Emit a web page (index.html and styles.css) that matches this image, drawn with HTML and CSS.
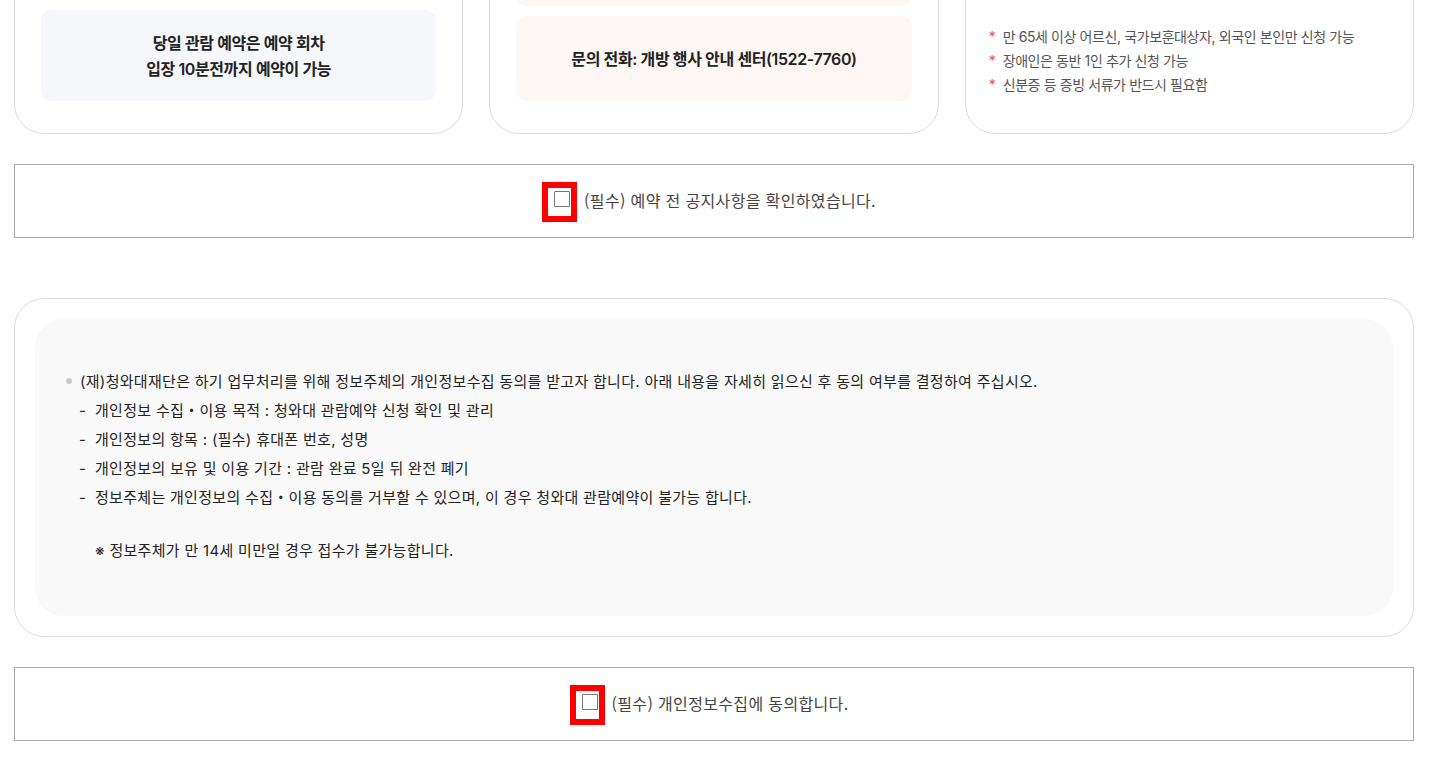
FILE: index.html
```html
<!DOCTYPE html>
<html lang="ko">
<head>
  <meta charset="UTF-8" />
  <meta name="viewport" content="width=device-width, initial-scale=1.0" />
  <title>관람 예약 안내</title>
  <link rel="stylesheet" href="styles.css">
</head>
<body>

  <div class="wrap">

    <div class="cards">
      <div class="card">
        <div class="card-box blue">
          당일 관람 예약은 예약 회차<br />
          입장 10분전까지 예약이 가능
        </div>
      </div>

      <div class="card">
        <div class="card-box pink top"></div>
        <div class="card-box pink phone">
          문의 전화: 개방 행사 안내 센터(1522-7760)
        </div>
      </div>

      <div class="card">
        <ul class="star-list">
          <li>만 65세 이상 어르신, 국가보훈대상자, 외국인 본인만 신청 가능</li>
          <li>장애인은 동반 1인 추가 신청 가능</li>
          <li>신분증 등 증빙 서류가 반드시 필요함</li>
        </ul>
      </div>
    </div>

    <label class="agree">
      <span class="mark"><span class="box"></span></span>
      <span class="agree-text">(필수) 예약 전 공지사항을 확인하였습니다.</span>
    </label>

    <div class="privacy">
      <div class="privacy-inner">
        <p class="lead"><span class="dot"></span>(재)청와대재단은 하기 업무처리를 위해 정보주체의 개인정보수집 동의를 받고자 합니다. 아래 내용을 자세히 읽으신 후 동의 여부를 결정하여 주십시오.</p>
        <p class="sub"><span class="dash">-</span>개인정보 수집・이용 목적 : 청와대 관람예약 신청 확인 및 관리</p>
        <p class="sub"><span class="dash">-</span>개인정보의 항목 : (필수) 휴대폰 번호, 성명</p>
        <p class="sub"><span class="dash">-</span>개인정보의 보유 및 이용 기간 : 관람 완료 5일 뒤 완전 폐기</p>
        <p class="sub"><span class="dash">-</span>정보주체는 개인정보의 수집・이용 동의를 거부할 수 있으며, 이 경우 청와대 관람예약이 불가능 합니다.</p>
        <p class="note">※ 정보주체가 만 14세 미만일 경우 접수가 불가능합니다.</p>
      </div>
    </div>

    <label class="agree">
      <span class="mark"><span class="box"></span></span>
      <span class="agree-text">(필수) 개인정보수집에 동의합니다.</span>
    </label>

  </div>

</body>
</html>
```

FILE: styles.css
```css
body {
  margin: 0;
  background: #fff;
  color: #222;
  font-family: Inter, "Noto Sans CJK KR", sans-serif;
}

.wrap {
  width: 1400px;
  margin-left: 14px;
}

.cards {
  display: grid;
  grid-template-columns: repeat(3, 1fr);
  gap: 26px;
  margin-top: -41px;
}

.card {
  height: 175px;
  box-sizing: border-box;
  border: 1px solid #dcdcdc;
  border-radius: 30px;
  padding: 0 26px 32px;
  display: flex;
  flex-direction: column;
  justify-content: flex-end;
}

.card-box {
  border-radius: 10px;
  display: flex;
  align-items: center;
  justify-content: center;
  text-align: center;
  font-size: 16px;
  font-weight: 600;
  line-height: 26px;
  letter-spacing: -0.4px;
  color: #222;
}

.card-box.blue {
  height: 91px;
  background: #f6f7fb;
}

.card-box.pink {
  background: #fcf6f4;
}

.card-box.top {
  height: 36px;
  margin-bottom: 10px;
}

.card-box.phone {
  height: 85px;
}

.star-list {
  list-style: none;
  margin: 0 0 4px;
  padding: 0;
  font-size: 14px;
  line-height: 24px;
  letter-spacing: -0.4px;
  color: #555;
}

.star-list li::before {
  content: "*";
  color: #e4572e;
  display: inline-block;
  width: 14px;
  margin-left: -3px;
}

.agree {
  margin-top: 30px;
  height: 74px;
  box-sizing: border-box;
  border: 1px solid #aaa;
  display: flex;
  align-items: center;
  justify-content: center;
  padding: 2px 10px 0 0;
  font-family: "Noto Sans CJK KR", sans-serif;
  font-size: 16px;
  letter-spacing: 0.35px;
  color: #444;
}

.agree-text {
  margin-top: -4px;
}

.mark {
  border: 6px solid #f00;
  padding: 3px 1px 9px 6px;
  margin-right: 7px;
  display: flex;
}

.box {
  width: 14px;
  height: 14px;
  border: 1px solid #767676;
  border-radius: 1px;
  background: #fff;
}

.privacy {
  margin-top: 60px;
  border: 1px solid #dcdcdc;
  border-radius: 30px;
  padding: 20px;
}

.privacy-inner {
  background: #f9f9f9;
  border-radius: 28px;
  padding: 48px 31px 51px;
  font-size: 15px;
  line-height: 29px;
  letter-spacing: 0.3px;
  color: #222;
}

.privacy-inner p {
  margin: 0;
}

.dot {
  display: inline-block;
  width: 6px;
  height: 6px;
  border-radius: 50%;
  background: #c8c8c8;
  margin-right: 8px;
  vertical-align: middle;
  position: relative;
  top: -2px;
}

.sub {
  padding-left: 13px;
}

.dash {
  display: inline-block;
  width: 16px;
}

.privacy-inner .note {
  margin-top: 24px;
  padding-left: 29px;
}
```
